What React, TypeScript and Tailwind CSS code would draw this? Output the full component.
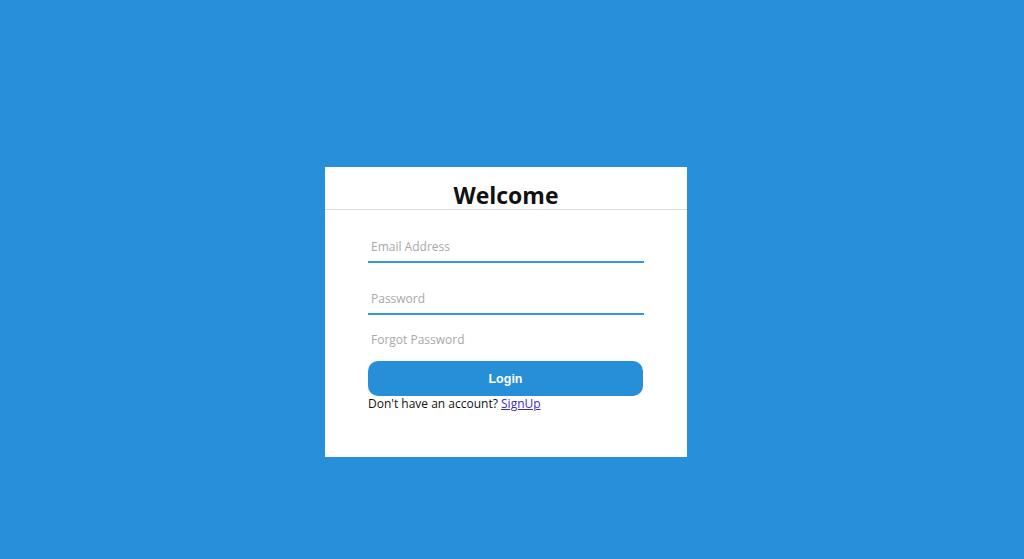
import React from "react";

export default function App() {
  return (
    <div className="w-full h-[559px] bg-[#2790da] flex items-center justify-center" style={{ fontFamily: '"Open Sans", sans-serif' }}>
      <div className="w-[362px] h-[290px] bg-white mt-[65px] mr-[12px] flex flex-col">
        <div className="h-[43px] border-b border-[#dcdcdc] flex items-end justify-center">
          <h1 className="text-[23px] font-bold text-[#111] leading-none pb-[2px]">Welcome</h1>
        </div>
        <div className="px-[43px] pt-[24px] flex flex-col">
          <input
            className="w-[276px] h-[29px] pb-[2px] border-b-2 border-[#3a95dc] outline-none text-[12px] px-[3px] placeholder-[#a8a8a8]"
            placeholder="Email Address"
          />
          <input
            type="password"
            className="w-[276px] h-[29px] pb-[2px] mt-[23px] border-b-2 border-[#3a95dc] outline-none text-[12px] px-[3px] placeholder-[#a8a8a8]"
            placeholder="Password"
          />
          <div className="mt-[15px] px-[3px] text-[12px] text-[#a8a8a8] leading-[20px]">Forgot Password</div>
          <button className="mt-[11px] w-[275px] h-[35px] pt-[2px] rounded-[10px] bg-[#268fd8] text-white text-[12.5px] font-bold" style={{ fontFamily: '"Liberation Sans", Arial, sans-serif' }}>
            Login
          </button>
          <div className="text-[12px] text-[#111] leading-[15px]">
            Don't have an account? <a href="#" className="text-[#3b2bc4] underline">SignUp</a>
          </div>
        </div>
      </div>
    </div>
  );
}
